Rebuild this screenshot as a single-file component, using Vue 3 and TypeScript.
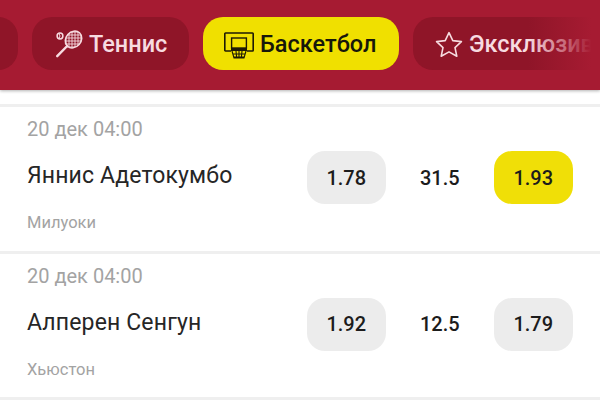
<script setup lang="ts">
interface Row {
  time: string
  name: string
  team: string
  over: string
  line: string
  under: string
  active: boolean
}
const rows: Row[] = [
  { time: '20 дек 04:00', name: 'Яннис Адетокумбо', team: 'Милуоки', over: '1.78', line: '31.5', under: '1.93', active: true },
  { time: '20 дек 04:00', name: 'Алперен Сенгун', team: 'Хьюстон', over: '1.92', line: '12.5', under: '1.79', active: false },
]
</script>

<template>
  <div class="page">
    <header class="header">
      <div class="tabs">
        <div class="tab tab-hidden"></div>
        <div class="tab tab-tennis">
          <svg class="ico" width="30" height="30" viewBox="0 0 30 30" fill="none">
            <defs>
              <clipPath id="head"><ellipse cx="18.5" cy="10.5" rx="7.6" ry="9" transform="rotate(42 18.5 10.5)" /></clipPath>
            </defs>
            <g clip-path="url(#head)" stroke="currentColor" stroke-width="0.9">
              <path d="M8 3h20M8 6h20M8 9h20M8 12h20M8 15h20M8 18h20" />
              <path d="M11 0v22M14 0v22M17 0v22M20 0v22M23 0v22M26 0v22" />
            </g>
            <ellipse cx="18.5" cy="10.5" rx="7.6" ry="9" transform="rotate(42 18.5 10.5)" stroke="currentColor" stroke-width="1.5" />
            <path d="M12.2 17 L2.2 27.2" stroke="currentColor" stroke-width="2.4" stroke-linecap="round" />
            <path d="M10.2 13.6 L13.2 18.4" stroke="currentColor" stroke-width="1.3" />
            <circle cx="5" cy="7" r="2.9" stroke="currentColor" stroke-width="1.5" />
            <path d="M4 4.5a4 4 0 0 1 0 5" stroke="currentColor" stroke-width="1" />
          </svg>
          <span>Теннис</span>
        </div>
        <div class="tab tab-active">
          <svg class="ico ico-basket" width="30" height="27" viewBox="0 0 30 27" fill="none" stroke="#1d1a05">
            <path d="M7 19H1.5a.7.7 0 0 1-.7-.7V1.7a.7.7 0 0 1 .7-.7h27a.7.7 0 0 1 .7.7v16.6a.7.7 0 0 1-.7.7H23" stroke-width="1.6" />
            <rect x="7.6" y="6" width="14.8" height="10" stroke-width="1.4" />
            <rect x="7" y="16" width="16" height="3" fill="#1d1a05" stroke="none" />
            <path d="M8 19l2 7h10l2-7M12 19l.7 7M15 19v7M18 19l-.7 7M9 22h12M10 25h10" stroke-width="1.1" />
          </svg>
          <span>Баскетбол</span>
        </div>
        <div class="tab tab-star">
          <svg class="ico" width="28" height="26" viewBox="0 0 28 26" fill="none">
            <path d="M14 1.6l3.8 8 8.6 1-6.4 6 1.8 8.6L14 20.9l-7.8 4.3L8 16.6l-6.4-6 8.6-1z" stroke="currentColor" stroke-width="1.6" stroke-linejoin="round" />
          </svg>
          <span>Эксклюзив</span>
        </div>
      </div>
      <div class="fade"></div>
    </header>

    <div class="gap"></div>

    <section v-for="row in rows" :key="row.name" class="card">
      <div class="time">{{ row.time }}</div>
      <div class="main">
        <div class="name">{{ row.name }}</div>
        <div class="odds">
          <div class="odd">{{ row.over }}</div>
          <div class="line">{{ row.line }}</div>
          <div class="odd" :class="{ selected: row.active }">{{ row.under }}</div>
        </div>
      </div>
      <div class="team">{{ row.team }}</div>
    </section>
  </div>
</template>

<style>
html, body { margin: 0; background: #fff; }
</style>

<style scoped>
.page {
  width: 600px;
  height: 400px;
  overflow: hidden;
  background: #efefef;
  font-family: Roboto, "Noto Sans", sans-serif;
}
.header {
  position: relative;
  z-index: 1;
  height: 90px;
  box-sizing: border-box;
  padding-top: 17px;
  background: #a61b32;
  box-shadow: 0 1px 3px rgba(0, 0, 0, 0.3);
}
.tabs {
  display: flex;
  gap: 14px;
  margin-left: -82px;
  width: 800px;
}
.tab {
  flex: none;
  display: flex;
  align-items: center;
  height: 53px;
  box-sizing: border-box;
  border-radius: 20px;
  background: #8f1528;
  color: #f7dbe0;
  font-size: 23.5px;
  font-weight: 500;
}
.tab-hidden { width: 100px; }
.tab-tennis { width: 157px; padding-left: 23px; gap: 4px; }
.tab-active {
  width: 196px;
  padding-left: 21px;
  gap: 6px;
  background: #f0e000;
  color: #17170a;
}
.ico-basket { margin-top: 3px; }
.tab-star { width: 220px; padding-left: 22px; gap: 6px; }
.fade {
  position: absolute;
  top: 0;
  right: 0;
  width: 72px;
  height: 90px;
  background: linear-gradient(to right, rgba(166, 27, 50, 0), #a61b32 88%);
}
.gap {
  height: 14px;
  background: #fff;
  margin-bottom: 3px;
}
.card {
  height: 143.5px;
  box-sizing: border-box;
  padding: 10px 27px 0;
  margin-bottom: 3px;
  background: #fff;
}
.time {
  height: 24px;
  line-height: 24px;
  font-size: 20px;
  color: #a3a3a3;
}
.main {
  display: flex;
  align-items: flex-start;
  justify-content: space-between;
  margin-top: 10px;
}
.name {
  margin-top: 8px;
  line-height: 34px;
  font-size: 23px;
  letter-spacing: 0.15px;
  color: #262626;
}
.odds {
  display: flex;
  align-items: center;
}
.odd {
  width: 79.5px;
  height: 53px;
  border-radius: 18px;
  background: #ececec;
  display: flex;
  align-items: center;
  justify-content: center;
  font-size: 20px;
  font-weight: 500;
  color: #1c1c1c;
}
.odd.selected {
  background: #f0df07;
}
.line {
  width: 107.5px;
  text-align: center;
  font-size: 20px;
  font-weight: 500;
  color: #1c1c1c;
}
.team {
  margin-top: 9px;
  line-height: 20px;
  font-size: 16.5px;
  color: #a3a3a3;
}
</style>
